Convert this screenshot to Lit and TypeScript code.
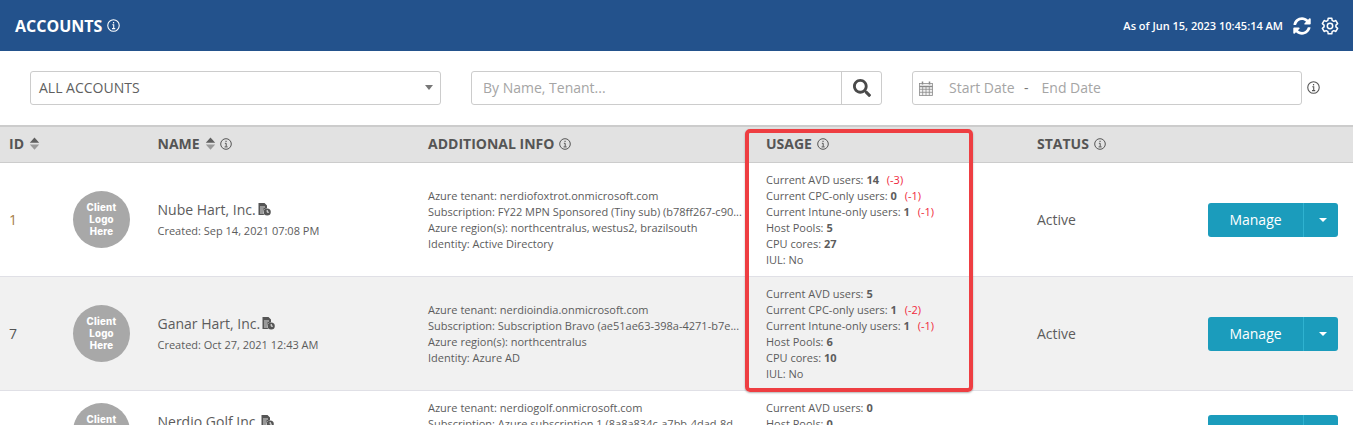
import { LitElement, html, css, svg } from "lit";
import { customElement } from "lit/decorators.js";

const info = (size = 12) => html`<svg class="info" width=${size} height=${size} viewBox="0 0 12 12" fill="none" stroke="currentColor"><circle cx="6" cy="6" r="5.3" stroke-width="1"/><path d="M4.9 5.3H6.2V8.6M4.6 8.9H7.6" stroke-width="1"/><path d="M5.5 3.4H6.6" stroke-width="1.3"/></svg>`;
const sort = html`<svg class="sort" width="11" height="13" viewBox="0 0 11 13"><path d="M5.5 0.5 10.2 5.8H0.8Z" fill="#5f5f5f"/><path d="M0.8 7.4H10.2L5.5 12.7Z" fill="#9a9a9a"/></svg>`;
const doc = html`<svg class="doc" width="13" height="13" viewBox="0 0 13 13"><path d="M0.5 0H6.5L9 2.5V5.2A4 4 0 0 0 6.2 12H0.5Z" fill="#555"/><path d="M2 4H7M2 6H5.6M2 8H5M2 10H5" stroke="#eee" stroke-width="0.9"/><circle cx="9.2" cy="9" r="3.6" fill="#555"/><path d="M9.2 7V9.2H10.9" stroke="#fff" fill="none" stroke-width="0.9"/></svg>`;
const sync = svg`<svg width="18" height="18" viewBox="0 0 512 512" fill="#fff"><path d="M370.72 133.28C339.458 104.008 298.888 87.962 255.848 88c-77.458.068-144.328 53.178-162.791 126.85-1.344 5.363-6.122 9.15-11.651 9.15H24.103c-7.498 0-13.194-6.807-11.807-14.176C33.933 94.924 134.813 8 256 8c66.448 0 126.791 26.136 171.315 68.685L463.03 40.97C478.149 25.851 504 36.559 504 57.941V192c0 13.255-10.745 24-24 24H345.941c-21.382 0-32.09-25.851-16.971-40.971l41.75-41.749zM32 296h134.059c21.382 0 32.09 25.851 16.971 40.971l-41.75 41.75c31.262 29.273 71.835 45.319 114.876 45.28 77.418-.07 144.315-53.144 162.787-126.849 1.344-5.363 6.122-9.15 11.651-9.15h57.304c7.498 0 13.194 6.807 11.807 14.176C478.067 417.076 377.187 504 256 504c-66.448 0-126.791-26.136-171.315-68.685L48.97 471.03C33.851 486.149 8 475.441 8 454.059V320c0-13.255 10.745-24 24-24z"/></svg>`;

// Six-toothed cog outline, built from the tooth angles.
const cogPath = (() => {
  const pts: string[] = [];
  const at = (deg: number, r: number) => {
    const a = (deg * Math.PI) / 180;
    return `${(9 + r * Math.sin(a)).toFixed(2)} ${(9 - r * Math.cos(a)).toFixed(2)}`;
  };
  for (let k = 0; k < 6; k++) {
    const c = k * 60;
    pts.push(at(c - 13, 8), at(c + 13, 8), at(c + 21, 6), at(c + 39, 6));
  }
  return "M" + pts.join("L") + "Z";
})();
const gear = svg`<svg width="18" height="18" viewBox="0 0 18 18" fill="none" stroke="#fff" stroke-width="1.5" stroke-linejoin="round"><path d=${cogPath}/><circle cx="9" cy="9" r="2.7"/></svg>`;

const search = svg`<svg width="18" height="18" viewBox="0 0 512 512" fill="#4a4a4a"><path d="M505 442.7 405.3 343c-4.500-4.500-10.600-7-17-7H372c27.600-35.300 44-79.700 44-128C416 93.100 322.900 0 208 0S0 93.100 0 208s93.100 208 208 208c48.300 0 92.700-16.400 128-44v16.300c0 6.400 2.500 12.500 7 17l99.700 99.700c9.400 9.400 24.600 9.400 33.900 0l28.300-28.300c9.400-9.400 9.400-24.600.1-34zM208 336c-70.700 0-128-57.200-128-128 0-70.700 57.200-128 128-128 70.700 0 128 57.200 128 128 0 70.700-57.200 128-128 128z"/></svg>`;
const cal = svg`<svg width="14" height="15" viewBox="0 0 14 15" fill="none" stroke="#8a8a8a" stroke-width="0.8"><rect x="0.5" y="2.5" width="13" height="12" fill="#f2f2f2"/><path d="M0.5 5.5H13.5" stroke-width="1.4"/><path d="M0.5 8.3H13.5M0.5 11.3H13.5M3.7 5.5V14.5M7 5.5V14.5M10.3 5.5V14.5"/><path d="M3.5 0.5V3.5M10.5 0.5V3.5" stroke-width="1.5"/></svg>`;

type Row = {
  id: string;
  name: string;
  created: string;
  info: string[];
  usage: { label: string; value?: string; delta?: string }[];
  status: string;
};

const rows: Row[] = [
  {
    id: "1",
    name: "Nube Hart, Inc.",
    created: "Created: Sep 14, 2021 07:08 PM",
    info: [
      "Azure tenant: nerdiofoxtrot.onmicrosoft.com",
      "Subscription: FY22 MPN Sponsored (Tiny sub) (b78ff267-c90...",
      "Azure region(s): northcentralus, westus2, brazilsouth",
      "Identity: Active Directory",
    ],
    usage: [
      { label: "Current AVD users:", value: "14", delta: "(-3)" },
      { label: "Current CPC-only users:", value: "0", delta: "(-1)" },
      { label: "Current Intune-only users:", value: "1", delta: "(-1)" },
      { label: "Host Pools:", value: "5" },
      { label: "CPU cores:", value: "27" },
      { label: "IUL: No" },
    ],
    status: "Active",
  },
  {
    id: "7",
    name: "Ganar Hart, Inc.",
    created: "Created: Oct 27, 2021 12:43 AM",
    info: [
      "Azure tenant: nerdioindia.onmicrosoft.com",
      "Subscription: Subscription Bravo (ae51ae63-398a-4271-b7e...",
      "Azure region(s): northcentralus",
      "Identity: Azure AD",
    ],
    usage: [
      { label: "Current AVD users:", value: "5" },
      { label: "Current CPC-only users:", value: "1", delta: "(-2)" },
      { label: "Current Intune-only users:", value: "1", delta: "(-1)" },
      { label: "Host Pools:", value: "6" },
      { label: "CPU cores:", value: "10" },
      { label: "IUL: No" },
    ],
    status: "Active",
  },
  {
    id: "9",
    name: "Nerdio Golf Inc.",
    created: "Created: Nov 02, 2021 10:15 AM",
    info: [
      "Azure tenant: nerdiogolf.onmicrosoft.com",
      "Subscription: Azure subscription 1 (8a8a834c-a7bb-4dad-8d...",
      "Azure region(s): northcentralus",
      "Identity: Azure AD",
    ],
    usage: [
      { label: "Current AVD users:", value: "0" },
      { label: "Host Pools:", value: "0" },
      { label: "CPU cores:", value: "0" },
      { label: "IUL: No" },
    ],
    status: "Active",
  },
];

@customElement("app-root")
export class AppRoot extends LitElement {
  static styles = css`
    :host {
      display: block;
      position: relative;
      width: 1353px;
      height: 425px;
      overflow: hidden;
      background: #fff;
      font-family: "Open Sans", sans-serif;
      color: #5c5c5c;
    }
    .info { display: block; flex: none; }
    .topbar {
      height: 51px;
      background: #23528c;
      color: #fff;
      display: flex;
      align-items: center;
      padding: 0 15px;
      box-sizing: border-box;
    }
    .title { font-size: 16px; font-weight: 700; margin-right: 5px; }
    .stamp { margin-left: auto; font-size: 11px; font-weight: 600; margin-right: 10px; }
    .topicons { display: flex; gap: 10px; align-items: center; margin-right: -1px; }
    .filters {
      height: 74px;
      box-sizing: border-box;
      padding: 20px 0 0 30px;
      display: flex;
      align-items: flex-start;
    }
    .control {
      height: 34px;
      box-sizing: border-box;
      border: 1px solid #ccc;
      border-radius: 3px;
      display: flex;
      align-items: center;
      font-size: 14px;
      background: #fff;
    }
    .control > span { padding-bottom: 1px; white-space: nowrap; }
    .select { width: 411px; padding: 0 8px; justify-content: space-between; color: #5f5f5f; }
    .caret { width: 0; height: 0; border: 4px solid transparent; border-top: 5px solid #777; border-bottom: 0; margin-right: -1px; }
    .searchbox { width: 411px; margin-left: 30px; }
    .searchbox span { flex: 1; padding-left: 11px; color: #a5a5a5; }
    .searchbtn { width: 39px; height: 100%; border-left: 1px solid #ccc; display: flex; align-items: center; justify-content: center; }
    .date { width: 390px; margin-left: 30px; padding-left: 6px; color: #a5a5a5; }
    .date .start { margin-left: 16px; width: 65px; }
    .date .dash { margin: 0 13px 0 10px; color: #777; }
    .dateinfo { margin: 10px 0 0 5px; color: #555; }
    .thead, .row {
      display: grid;
      grid-template-columns: 73px 84.5px 270.5px 338px 271px 171px 130px;
      align-items: center;
    }
    .thead {
      height: 38px;
      box-sizing: border-box;
      background: #e2e2e2;
      border-top: 2px solid #ccc;
      border-bottom: 1px solid #ccc;
      font-size: 14px;
      font-weight: 700;
      color: #555;
      padding-bottom: 2px;
    }
    .th { display: flex; align-items: center; gap: 5px; }
    .th.id { padding-left: 9px; }
    .sort { flex: none; margin-right: -1px; }
    .row {
      box-sizing: border-box;
      padding-top: 9px;
      padding-bottom: 8px;
      border-bottom: 1px solid #e0e0e6;
    }
    .row.alt { background: #f1f1f1; }
    .cid { padding-left: 9px; padding-bottom: 2px; font-size: 14px; color: #555; }
    .cid.first { color: #a67c45; }
    .logo {
      width: 57px;
      height: 57px;
      margin-bottom: 1px;
      border-radius: 50%;
      background: #a8a8a8;
      color: #fff;
      display: flex;
      align-items: center;
      justify-content: center;
      text-align: center;
      font-family: "Inter", sans-serif;
      font-size: 9.7px;
      letter-spacing: 0.25px;
      line-height: 12px;
      font-weight: 800;
    }
    .namecell { padding-bottom: 2px; }
    .name { font-size: 14px; display: flex; align-items: center; gap: 2px; line-height: 20px; }
    .created { font-size: 11px; line-height: 16px; margin-top: 3px; }
    .lines { font-size: 11px; line-height: 16px; white-space: nowrap; }
    .lines b { font-weight: 700; }
    .delta { color: #f0283c; margin-left: 5px; }
    .status { font-size: 14px; padding-bottom: 2px; }
    .split { display: flex; height: 34px; width: 130px; border-radius: 3px; overflow: hidden; background: #1b9cbc; color: #fff; font-size: 14px; }
    .split .main { flex: 1; display: flex; align-items: center; justify-content: center; border-right: 1px solid #2fb2d0; padding-bottom: 2px; box-sizing: border-box; }
    .split .more { width: 34px; box-sizing: border-box; padding-left: 3px; display: flex; align-items: center; justify-content: center; }
    .split .more i { width: 0; height: 0; border: 4px solid transparent; border-top: 4px solid #fff; border-bottom: 0; }
    .highlight {
      position: absolute;
      left: 745px;
      top: 129px;
      width: 228px;
      height: 263px;
      box-sizing: border-box;
      border: 4px solid #ee3e42;
      border-radius: 5px;
      box-shadow: 0 1px 2px rgba(0, 0, 0, 0.3);
      pointer-events: none;
    }
  `;

  private renderRow(r: Row, i: number) {
    return html`<div class="row ${i === 1 ? "alt" : ""}">
      <div class="cid ${i === 0 ? "first" : ""}">${r.id}</div>
      <div><div class="logo"><span>Client<br />Logo<br />Here</span></div></div>
      <div class="namecell">
        <div class="name">${r.name} ${doc}</div>
        <div class="created">${r.created}</div>
      </div>
      <div class="lines">${r.info.map((l) => html`<div>${l}</div>`)}</div>
      <div class="lines">
        ${r.usage.map(
          (u) => html`<div>${u.label} ${u.value ? html`<b>${u.value}</b>` : ""}${u.delta ? html` <span class="delta">${u.delta}</span>` : ""}</div>`
        )}
      </div>
      <div class="status">${r.status}</div>
      <div class="split"><div class="main">Manage</div><div class="more"><i></i></div></div>
    </div>`;
  }

  render() {
    return html`
      <div class="topbar">
        <div class="title">ACCOUNTS</div>
        ${info(13)}
        <div class="stamp">As of Jun 15, 2023 10:45:14 AM</div>
        <div class="topicons">${sync}${gear}</div>
      </div>
      <div class="filters">
        <div class="control select"><span>ALL ACCOUNTS</span><span class="caret"></span></div>
        <div class="control searchbox"><span>By Name, Tenant...</span><div class="searchbtn">${search}</div></div>
        <div class="control date">${cal}<span class="start">Start Date</span><span class="dash">-</span><span>End Date</span></div>
        <div class="dateinfo">${info(13)}</div>
      </div>
      <div class="thead">
        <div class="th id">ID ${sort}</div>
        <div></div>
        <div class="th">NAME ${sort}${info()}</div>
        <div class="th">ADDITIONAL INFO ${info()}</div>
        <div class="th">USAGE ${info()}</div>
        <div class="th">STATUS ${info()}</div>
        <div></div>
      </div>
      ${rows.map((r, i) => this.renderRow(r, i))}
      <div class="highlight"></div>
    `;
  }
}
